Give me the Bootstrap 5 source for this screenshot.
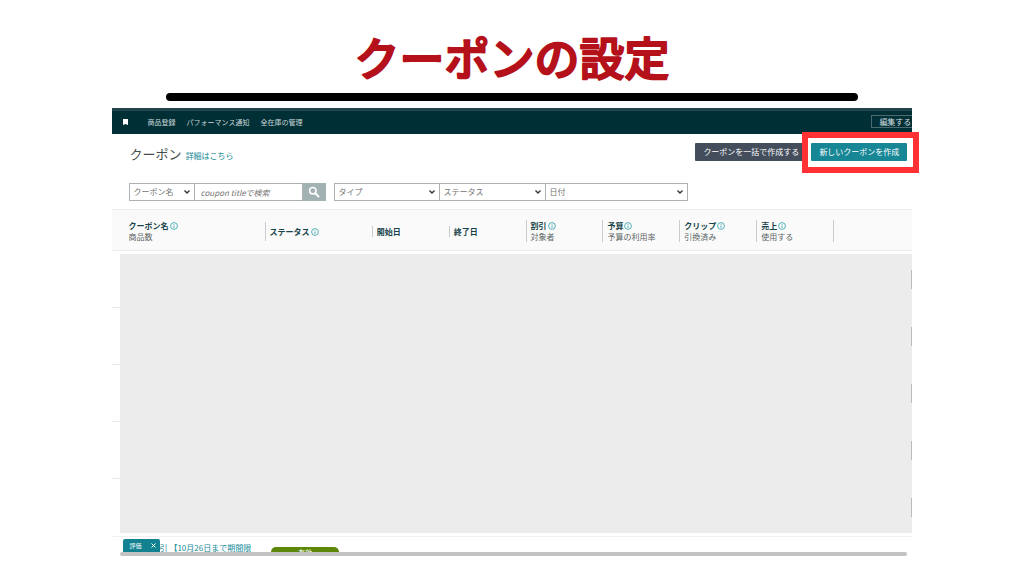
<!DOCTYPE html>
<html lang="ja">
<head>
<meta charset="utf-8">
<meta name="viewport" content="width=device-width, initial-scale=1">
<title>クーポンの設定</title>
<link rel="stylesheet" href="https://cdn.jsdelivr.net/npm/bootstrap@5.3.0/dist/css/bootstrap.min.css">
<style>
body{font-family:"Noto Sans CJK JP",sans-serif;font-size:8px;line-height:12px;color:#5c6666;background:#fff}
.slide-title{font-size:45px;line-height:60px;margin-top:28px;margin-bottom:5px}
.slide-title svg{height:60px;overflow:visible}
.slide-title text{font-weight:500;fill:#b5111b;stroke:#b5111b;stroke-width:2px;stroke-linejoin:round}
.title-rule{height:8px;width:67.6%;background:#000;border-radius:4px;margin-bottom:7px}
.console{width:78.2%}
.console-nav{background:#002f36;border-top:3px solid #24444d;height:26px;font-size:7px;padding:0 0 2px 11px}
.console-nav a{color:#c9d6d8}
.nav-links{gap:11px;margin-left:20px}
.edit-btn{font-size:8px;line-height:11px;color:#d5dfe0;border:1px solid #4d6a70;border-right:0;padding:0 1px 0 7px}
.page-head{padding:9px 5px 0 18px;height:49px}
.page-name{font-size:13px;line-height:22px;color:#444c4c}
.teal-link{color:#138a96}
.act{font-size:8px;line-height:12px;height:18px;padding:0 8px;border:0;border-radius:1px;color:#fff}
.act-bulk{background:#434d5b;padding-right:12px}
.act-new{background:#178796;position:relative;z-index:2}
.spot{position:absolute;inset:-11px -12px -12px -9px;border:6px solid #ff3135;background:#fff}
.filters{padding:0 0 8px 17px;border-bottom:1px solid #ececec}
.fld{height:18px;font-size:8px;line-height:12px;color:#737373;border:1px solid #adb3b3;border-radius:0;background-color:#fff;padding:0 4px;min-width:0}
select.fld{appearance:none;background-image:url("data:image/svg+xml,%3Csvg xmlns='http://www.w3.org/2000/svg' viewBox='0 0 8 6'%3E%3Cpath d='M1.5 1.5 4 4 6.5 1.5' fill='none' stroke='%23333' stroke-width='1.4'/%3E%3C/svg%3E");background-repeat:no-repeat;background-position:right 3px center;background-size:8px 6px}
.fld+.fld{border-left-width:0}
input.fld{padding-left:6px}
.fld::placeholder{color:#737373;font-style:italic}
.w-a{width:66px}.w-b{width:108px}.w-c{width:106px}.w-d{width:142px}
.find-btn{width:23px;height:18px;background:#a2b1b1;border:0;padding:0}
.head-table{table-layout:fixed;background:#fafafa;border-bottom:1px solid #ececec;height:41px}
.head-table th{padding:2px 0 0;font-weight:400;vertical-align:middle;white-space:nowrap}
.head-table th>div{border-left:1px solid #c8cccc;padding-left:4px;line-height:11px}
.head-table th:first-child>div{border:0;padding-left:17px}
.head-table b{color:#17444a;font-weight:700}
.c1{width:19.1%}.c2{width:13.4%}.c3{width:9.6%}
.info{width:8px;height:8px;vertical-align:-1px;margin-left:1px}
.list-row{height:57px;border-bottom:1px solid #e9e9e9}
.grip{width:1px;height:19px;background:#bbb;position:relative;z-index:2}
.veil{position:absolute;inset:3px 0 3px 8px;background:#ececec}
.last-row{height:16px;padding-left:11px;border-top:1px solid #f0f0f0}
.tag{background:#128290;color:#fff;font-size:6px;width:37px;height:13px;border-radius:2px 2px 0 0;padding:0 4px 0 7px}
.tag button{background:none;border:0;padding:0;line-height:6px}
.coupon-link{height:11px;line-height:13px}
.pill{width:68px;height:5px;background:#5c8708;border-radius:5px 5px 0 0;color:#fff;font-size:7px;line-height:11px;margin-left:20px}
.hbar{height:4px;background:#c3c3c3;margin:0 5px 0 8px;border-radius:2px}
</style>
</head>
<body>
<h1 class="slide-title"><svg class="d-block w-100"><text x="50%" y="48" text-anchor="middle">クーポンの設定</text></svg></h1>
<div class="title-rule mx-auto"></div>
<main class="console mx-auto">
  <nav class="console-nav d-flex align-items-center">
    <svg width="5" height="6" viewBox="0 0 5 6" aria-hidden="true"><path d="M0 0h5v6L2.500 5 0 6z" fill="#fff"/></svg>
    <div class="nav-links d-flex">
      <a href="#" class="text-decoration-none">商品登録</a>
      <a href="#" class="text-decoration-none">パフォーマンス通知</a>
      <a href="#" class="text-decoration-none">全在庫の管理</a>
    </div>
    <button type="button" class="edit-btn bg-transparent ms-auto">編集する</button>
  </nav>
  <header class="page-head d-flex align-items-start justify-content-between">
    <div class="d-flex align-items-baseline gap-1">
      <h2 class="page-name fw-normal m-0">クーポン</h2>
      <a href="#" class="teal-link text-decoration-none">詳細はこちら</a>
    </div>
    <div class="d-flex">
      <button type="button" class="act act-bulk">クーポンを一括で作成する</button>
      <div class="position-relative">
        <span class="spot"></span>
        <button type="button" class="act act-new">新しいクーポンを作成</button>
      </div>
    </div>
  </header>
  <form class="filters d-flex gap-2">
    <div class="d-flex">
      <select class="fld w-a" aria-label="検索項目"><option>クーポン名</option></select>
      <input type="text" class="fld w-b" placeholder="coupon titleで検索" aria-label="検索">
      <button type="button" class="find-btn d-flex align-items-center justify-content-center" aria-label="検索する">
        <svg width="12" height="12" viewBox="0 0 12 12" fill="none" stroke="#fff"><circle cx="4.800" cy="4.800" r="3.200" stroke-width="1.500"/><path d="M7.300 7.300 11 11" stroke-width="2"/></svg>
      </button>
    </div>
    <div class="d-flex">
      <select class="fld w-c" aria-label="タイプ"><option>タイプ</option></select>
      <select class="fld w-c" aria-label="ステータス"><option>ステータス</option></select>
      <select class="fld w-d" aria-label="日付"><option>日付</option></select>
    </div>
  </form>
  <svg class="d-none"><symbol id="i" viewBox="0 0 8 8"><circle cx="4" cy="4" r="3.400" fill="none" stroke="#2f9faa" stroke-width=".8"/><path d="M4 1.900v.9M4 3.500v2.500" stroke="#2f9faa" stroke-width=".8"/></symbol></svg>
  <table class="head-table w-100">
    <colgroup><col class="c1"><col class="c2"><col class="c3"><col class="c3"><col class="c3"><col class="c3"><col class="c3"><col class="c3"><col></colgroup>
    <thead><tr>
      <th><div><b>クーポン名</b><svg class="info"><use href="#i"/></svg><br>商品数</div></th>
      <th><div class="py-1 my-1"><b>ステータス</b><svg class="info"><use href="#i"/></svg></div></th>
      <th><div><b>開始日</b></div></th>
      <th><div><b>終了日</b></div></th>
      <th><div><b>割引</b><svg class="info"><use href="#i"/></svg><br>対象者</div></th>
      <th><div><b>予算</b><svg class="info"><use href="#i"/></svg><br>予算の利用率</div></th>
      <th><div><b>クリップ</b><svg class="info"><use href="#i"/></svg><br>引換済み</div></th>
      <th><div><b>売上</b><svg class="info"><use href="#i"/></svg><br>使用する</div></th>
      <th><div>&nbsp;<br>&nbsp;</div></th>
    </tr></thead>
  </table>
  <section class="position-relative">
    <div class="veil"></div>
    <div class="list-row d-flex align-items-center justify-content-end"><span class="grip"></span></div>
    <div class="list-row d-flex align-items-center justify-content-end"><span class="grip"></span></div>
    <div class="list-row d-flex align-items-center justify-content-end"><span class="grip"></span></div>
    <div class="list-row d-flex align-items-center justify-content-end"><span class="grip"></span></div>
    <div class="list-row d-flex align-items-center justify-content-end border-0"><span class="grip"></span></div>
  </section>
  <div class="last-row d-flex align-items-end overflow-hidden">
    <div class="tag d-flex align-items-center justify-content-between"><span>評価</span><button type="button" aria-label="閉じる"><svg class="d-block" width="5" height="5" viewBox="0 0 5 5"><path d="M.5.5l4 4M4.500.5l-4 4" stroke="#fff"/></svg></button></div>
    <a href="#" class="coupon-link teal-link text-decoration-none">引 【10月26日まで期間限</a>
    <div class="pill text-center overflow-hidden">有効</div>
  </div>
  <div class="hbar"></div>
</main>
<script src="https://cdn.jsdelivr.net/npm/bootstrap@5.3.0/dist/js/bootstrap.bundle.min.js"></script>
</body>
</html>
